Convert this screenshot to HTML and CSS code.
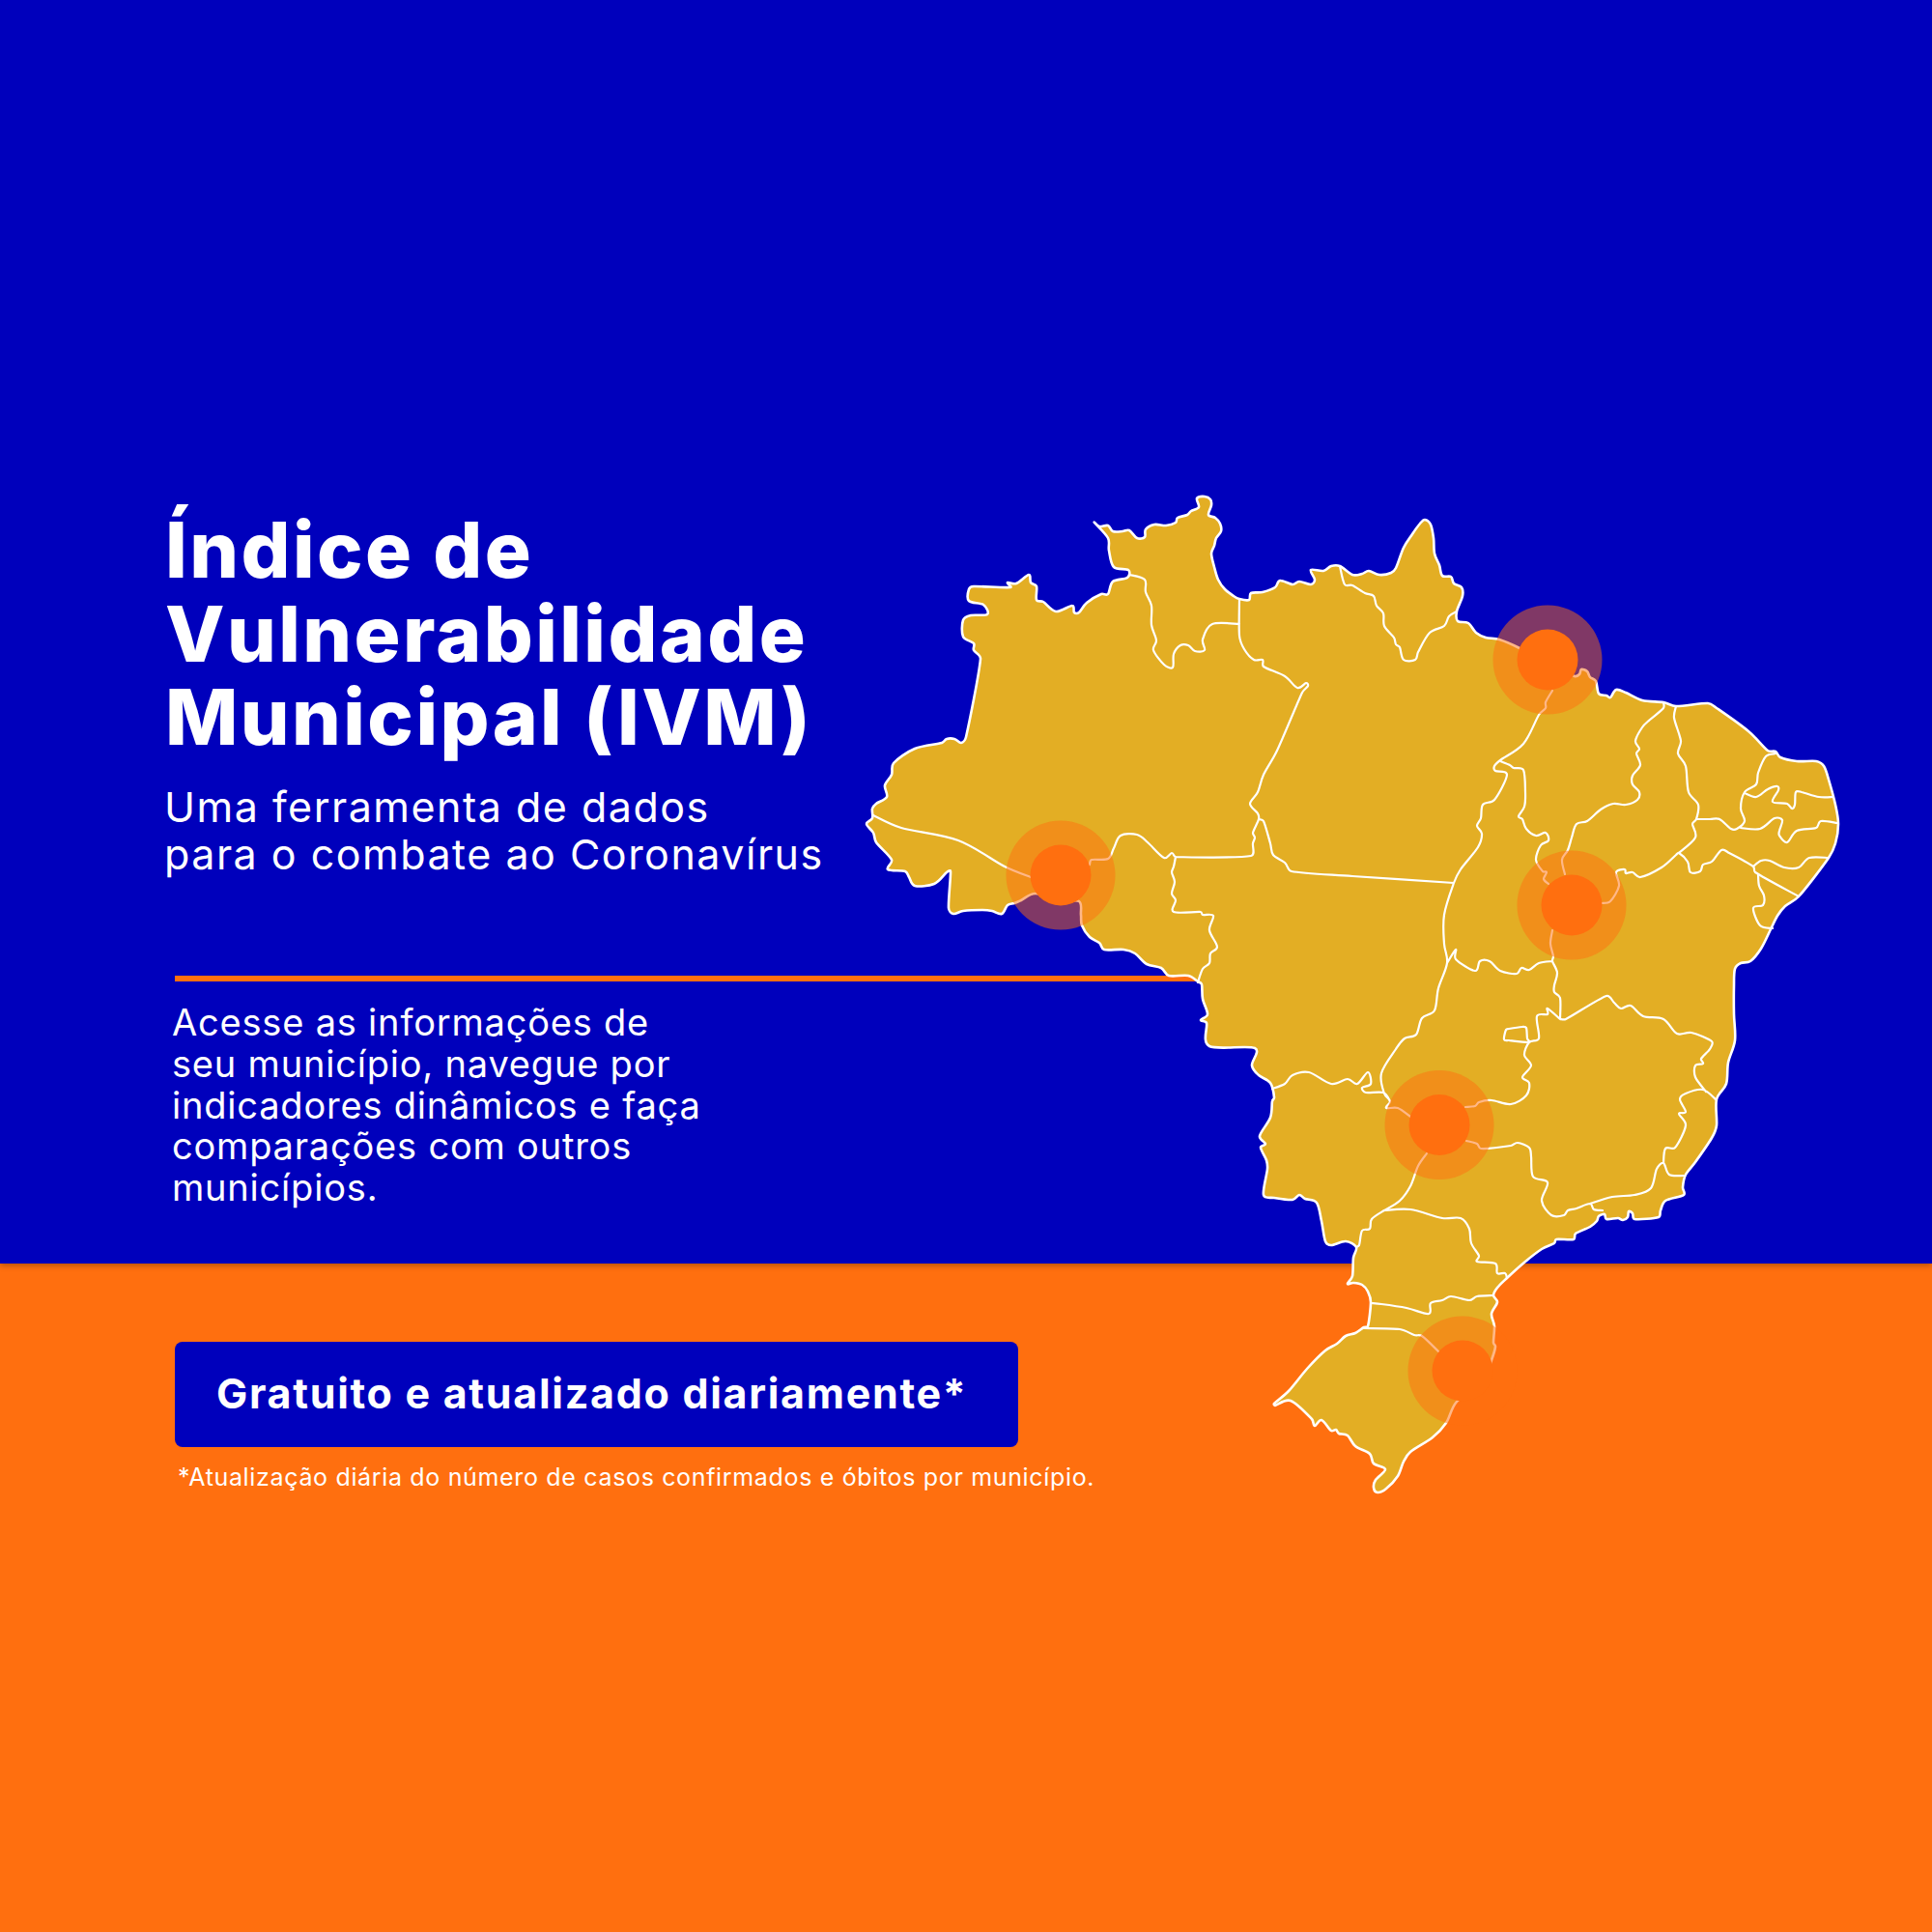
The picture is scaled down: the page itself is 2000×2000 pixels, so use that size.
FILE: index.html
```html
<!DOCTYPE html>
<html lang="pt-BR">
<head>
<meta charset="utf-8">
<title>Índice de Vulnerabilidade Municipal (IVM)</title>
<link rel="stylesheet" href="styles.css">
</head>
<body>
<main class="page">
  <section class="hero">
    <h1 class="title">Índice de<br>Vulnerabilidade<br>Municipal (IVM)</h1>
    <p class="subtitle">Uma ferramenta de dados<br>para o combate ao Coronavírus</p>
    <div class="rule"></div>
    <p class="lead">Acesse as informações de<br>seu município, navegue por<br>indicadores dinâmicos e faça<br>comparações com outros<br>municípios.</p>
  </section>
  <section class="cta">
    <div class="badge">Gratuito e atualizado diariamente*</div>
    <p class="note">*Atualização diária do número de casos confirmados e óbitos por município.</p>
  </section>
  <svg class="map" viewBox="0 0 2000 2000" aria-label="Mapa do Brasil">
    <path class="land smooth" d="M1133 541L1138 545L1147 544L1152 550L1162 550L1169 549L1177 557L1185 556L1186 548L1195 543L1207 544L1217 541L1219 536L1229 533L1233 529L1241 525L1239 516L1247 514L1253 517L1254 523L1251 533L1258 536L1263 542L1264 550L1259 557L1257 565L1254 573L1257 587L1261 600L1268 610L1277 617L1283 620L1293 621L1295 614L1307 613L1320 608L1325 601L1338 605L1345 602L1357 605L1361 600L1357 590L1370 591L1378 586L1387 586L1400 595L1410 594L1417 591L1428 595L1440 593L1445 588L1453 567L1462 553L1470 542L1475 538L1481 543L1484 557L1485 573L1490 585L1493 596L1502 597L1505 604L1513 608L1514 617L1508 633L1509 643L1520 645L1528 655L1538 660L1552 662L1573 671L1600 687L1630 700L1635 698L1637 693L1643 695L1646 701L1652 705L1655 718L1663 720L1667 722L1673 714L1683 717L1700 725L1722 727L1735 731L1768 728L1777 733L1810 757L1830 777L1838 778L1843 784L1860 788L1880 788L1888 793L1893 807L1900 833L1903 853L1900 873L1893 888L1862 928L1848 938L1840 948L1833 962L1823 982L1812 995L1802 997L1796 1003L1795 1020L1795 1050L1796 1077L1789 1100L1787 1122L1777 1138L1777 1165L1772 1178L1755 1203L1745 1216L1742 1229L1743 1237L1724 1243L1719 1253L1717 1260L1692 1262L1690 1256L1686 1254L1685 1260L1680 1263L1675 1261L1663 1262L1661 1257L1655 1259L1653 1264L1646 1270L1631 1277L1629 1283L1611 1283L1609 1287L1596 1293L1579 1306L1560 1323L1550 1333L1546 1341L1550 1348L1544 1360L1547 1373L1546 1390L1548 1394L1544 1408L1535 1430L1508 1451L1497 1473L1483 1488L1460 1503L1453 1513L1447 1528L1435 1541L1426 1545L1422 1540L1424 1532L1434 1521L1422 1515L1418 1505L1403 1497L1395 1486L1386 1484L1383 1480L1378 1481L1368 1470L1361 1476L1358 1469L1336 1450L1320 1455L1319 1453L1334 1440L1353 1417L1372 1398L1384 1391L1393 1383L1403 1380L1412 1374L1416 1373L1419 1348L1416 1337L1410 1330L1401 1328L1395 1329L1400 1321L1401 1302L1404 1291L1393 1285L1378 1289L1372 1285L1368 1264L1363 1245L1351 1241L1345 1237L1338 1242L1319 1240L1308 1237L1312 1210L1311 1201L1305 1188L1310 1184L1304 1176L1315 1157L1317 1140L1319 1136L1315 1121L1303 1113L1296 1103L1299 1085L1252 1083L1249 1059L1243 1056L1250 1050L1245 1034L1244 1019L1240 1016L1230 1010L1210 1010L1202 1002L1187 998L1175 987L1163 983L1143 983L1138 976L1128 970L1120 958L1119 947L1117 933L1097 933L1072 925L1057 932L1050 935L1043 937L1037 946L1027 943L1017 942L997 943L987 946L982 940L984 902L980 903L967 915L947 917L941 908L937 902L919 900L923 890L907 872L904 862L897 853L903 847L903 837L907 832L918 825L916 813L923 802L925 790L947 775L975 769L980 765L988 765L995 769L1000 763L1015 682L1008 673L1008 666L997 659L997 642L1005 637L1022 636L1018 626L1003 622L1003 610L1008 607L1046 608L1043 603L1052 604L1065 595L1067 603L1073 607L1073 621L1080 623L1093 633L1110 627L1112 634L1117 634L1125 624L1140 615L1147 615L1152 602L1167 598L1168 590L1153 587L1148 570L1147 557Z"/>
    <path class="borders smooth" d="M904 844L933 857L992 870L1040 897L1067 908
    M1128 895L1130 890L1147 889L1153 878L1160 865L1177 864L1188 872L1205 888L1213 883L1217 887L1295 886L1297 873L1299 867L1297 862L1303 848L1302 842L1294 832L1302 820L1308 802L1322 777L1348 717L1354 710L1352 707L1343 712L1330 700L1308 690L1307 683L1298 683L1288 672L1283 658L1283 620
    M1169 595L1185 600L1186 613L1192 627L1192 647L1197 663L1194 673L1205 688L1214 691L1215 677L1222 668L1230 668L1237 674L1247 673L1245 662L1255 646L1283 646
    M1217 887L1215 897L1213 903L1216 913L1213 925L1217 932L1215 944L1243 944L1245 947L1256 948L1252 963L1260 980L1253 987L1252 997L1245 1003L1240 1017
    M1303 848L1308 850L1315 873L1318 885L1330 893L1337 902L1400 907L1505 914
    M1387 586L1392 605L1400 606L1413 614L1422 617L1425 627L1432 635L1433 648L1443 660L1445 667L1449 670L1453 683L1465 683L1468 675L1480 655L1495 648L1500 638L1508 633
    M1607 715L1600 727L1600 733L1593 740L1577 770L1553 787L1547 793L1548 798L1560 802L1547 828L1535 833L1533 847L1529 855L1534 863L1530 877L1512 900L1505 914L1495 947L1495 977L1498 997L1489 1023L1485 1046L1472 1054L1466 1071L1454 1075L1445 1086L1430 1111L1433 1132L1439 1140L1435 1147L1447 1147L1460 1156
    M1553 788L1563 792L1567 795L1577 797L1579 820L1578 835L1572 845L1576 848L1580 858L1590 865L1600 862L1603 870L1595 875L1590 890L1597 902L1601 903L1598 910L1603 915
    M1607 963L1605 977L1608 990L1607 995L1612 1007L1609 1020L1609 1027L1615 1033L1615 1055
    M1498 997L1507 983L1507 993L1527 1005L1532 995L1542 995L1553 1005L1570 1008L1575 1002L1583 1004L1593 997L1607 995
    M1722 727L1722 733L1708 745L1700 753L1693 767L1697 775L1694 780L1698 792L1690 803L1690 812L1697 820L1695 828L1683 833L1670 832L1657 838L1643 850L1632 853L1627 867L1623 880L1617 890L1620 905
    M1735 731L1733 743L1740 767L1737 780L1745 793L1748 820L1758 833L1756 848L1752 853L1755 867L1738 883
    M1658 935L1667 933L1676 917L1673 903L1682 900L1683 904L1690 903L1698 908L1720 898L1735 885L1738 883L1747 892L1750 903L1760 902L1763 895L1772 892L1782 880L1790 883L1815 897L1817 903L1862 928
    M1756 848L1770 848L1780 848L1792 858L1798 858L1806 850L1802 837L1806 820L1818 812L1820 800L1828 783L1838 780
    M1806 821L1818 825L1830 817L1840 814L1841 818L1835 830L1850 832L1855 837L1858 833L1859 820L1865 820L1883 825L1898 825
    M1802 857L1822 858L1837 847L1845 849L1842 860L1842 865L1850 872L1860 860L1880 857L1885 850L1902 852
    M1815 897L1823 891L1832 891L1847 898L1862 898L1873 888L1893 888
    M1820 905L1821 917L1826 927L1825 937L1815 940L1822 958L1835 961
    M1559 1066L1562 1065L1576 1063L1580 1064L1581 1075L1583 1079L1562 1077L1557 1076Z
    M1615 1055L1602 1044L1602 1050L1591 1052L1593 1075L1583 1079L1578 1092L1585 1103L1576 1115L1583 1121L1580 1134L1564 1143L1544 1139L1531 1141L1527 1145L1517 1146
    M1477 1194L1468 1207L1460 1228L1449 1243L1433 1253
    M1518 1181L1529 1184L1533 1189L1564 1186L1571 1183L1583 1188L1585 1197L1587 1218L1602 1224L1596 1243L1606 1258L1619 1258L1623 1253L1632 1251L1646 1246L1650 1252L1659 1253
    M1646 1246L1669 1239L1692 1237L1709 1230L1715 1210L1722 1204L1728 1216L1743 1217
    M1722 1204L1724 1189L1734 1188L1745 1165L1738 1153L1745 1151L1739 1138L1745 1132L1763 1128L1777 1139
    M1615 1055L1621 1055L1663 1031L1671 1038L1678 1044L1688 1041L1701 1052L1722 1055L1736 1070L1751 1069L1772 1078L1770 1086L1761 1096L1763 1101L1755 1103L1755 1115L1766 1130
    M1317 1127L1330 1122L1338 1113L1355 1110L1378 1122L1395 1117L1405 1122L1416 1110L1419 1122L1410 1126L1414 1131L1432 1131L1439 1140
    M1433 1253L1420 1262L1418 1272L1410 1274L1407 1289L1404 1291
    M1433 1253L1460 1252L1493 1261L1512 1261L1521 1272L1523 1287L1531 1300L1529 1306L1548 1308L1550 1318L1558 1318L1560 1323
    M1419 1349L1430 1350L1456 1354L1479 1360L1481 1349L1493 1346L1502 1342L1521 1346L1529 1342L1546 1341
    M1412 1375L1449 1376L1464 1382L1472 1383L1489 1399"/>
    <g class="pulse">
      <circle class="ring" cx="1098" cy="906" r="56.5"/><circle class="dot" cx="1098" cy="906" r="31.5"/>
      <circle class="ring" cx="1602" cy="683" r="56.5"/><circle class="dot" cx="1602" cy="683" r="31.5"/>
      <circle class="ring" cx="1627" cy="937" r="56.5"/><circle class="dot" cx="1627" cy="937" r="31.5"/>
      <circle class="ring" cx="1490" cy="1164.5" r="56.5"/><circle class="dot" cx="1490" cy="1164.5" r="31.5"/>
      <circle class="ring" cx="1514" cy="1419" r="56.5"/><circle class="dot" cx="1514" cy="1419" r="31.5"/>
    </g>
  </svg>
</main>
<script src="map.js"></script>
</body>
</html>
```

FILE: styles.css
```css
* { box-sizing: border-box; }
html, body { margin: 0; padding: 0; }
body { font-family: Inter, "Noto Sans", sans-serif; color: #fff; }
.page { position: relative; width: 2000px; height: 2000px; display: flex; flex-direction: column; background: #ff6f0f; overflow: hidden; }
.hero { height: 1308px; padding: 526px 0 0 171px; background: #0000bc; box-shadow: 0 2px 6px rgba(0,0,0,.3); position: relative; z-index: 1; }
.title { margin: 0; font-size: 80px; line-height: 86.7px; font-weight: 800; letter-spacing: 2.4px; }
.subtitle { margin: 24.5px 0 0 -1px; font-size: 43px; line-height: 49.5px; letter-spacing: 1.5px; }
.rule { width: 1060px; height: 6px; margin: 100.4px 0 0 10px; background: #ff6f0f; }
.lead { margin: 21px 0 0 7px; font-size: 38px; line-height: 42.8px; letter-spacing: .8px; }
.cta { padding: 81px 0 0 181px; }
.badge { width: 873px; height: 109px; padding-left: 43px; border-radius: 8px; background: #0000bc; font-size: 43px; line-height: 107px; font-weight: 700; letter-spacing: 1.7px; }
.note { margin: 16px 0 0 3px; font-size: 25px; line-height: 30px; letter-spacing: .66px; }
.map { position: absolute; z-index: 2; left: 0; top: 0; width: 2000px; height: 2000px; }
.land { fill: #e3ae24; stroke: #fff; stroke-width: 2.6; stroke-linejoin: round; }
.borders { fill: none; stroke: #fff; stroke-width: 2.2; stroke-linejoin: round; stroke-linecap: round; }
.ring { fill: #ff6f0f; opacity: .5; }
.dot { fill: #ff6f0f; }
```

FILE: map.js
```js
// Rounds the traced polylines of the map into curves (Catmull-Rom to Bezier).
document.querySelectorAll('path.smooth').forEach(function (path) {
  var out = path.getAttribute('d').split('M').filter(function (s) { return s.trim(); }).map(function (sub) {
    var closed = /Z\s*$/.test(sub);
    var pts = sub.replace(/Z/g, '').trim().split('L').map(function (p) {
      return p.trim().split(/\s+/).map(Number);
    });
    var n = pts.length;
    var at = function (i) {
      return closed ? pts[(i + n) % n] : pts[Math.max(0, Math.min(n - 1, i))];
    };
    var limit = function (dx, dy, seg) {
      var len = Math.hypot(dx, dy) / 6 || 1;
      var k = Math.min(1, seg * 0.38 / len) / 6;
      return [dx * k, dy * k];
    };
    var d = 'M' + pts[0][0] + ' ' + pts[0][1];
    for (var i = 0; i < (closed ? n : n - 1); i++) {
      var p0 = at(i - 1), p1 = at(i), p2 = at(i + 1), p3 = at(i + 2);
      var seg = Math.hypot(p2[0] - p1[0], p2[1] - p1[1]);
      var a = limit(p2[0] - p0[0], p2[1] - p0[1], seg);
      var b = limit(p3[0] - p1[0], p3[1] - p1[1], seg);
      d += 'C' + (p1[0] + a[0]).toFixed(1) + ' ' + (p1[1] + a[1]).toFixed(1) + ' ' +
        (p2[0] - b[0]).toFixed(1) + ' ' + (p2[1] - b[1]).toFixed(1) + ' ' + p2[0] + ' ' + p2[1];
    }
    return d + (closed ? 'Z' : '');
  });
  path.setAttribute('d', out.join(''));
});
```
